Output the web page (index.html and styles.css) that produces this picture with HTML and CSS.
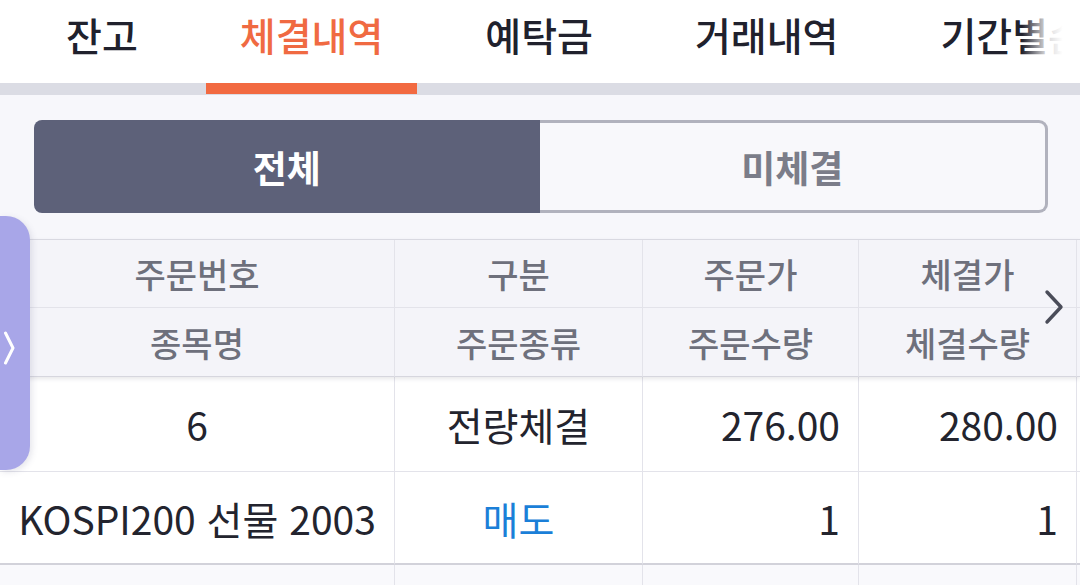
FILE: index.html
```html
<!DOCTYPE html>
<html lang="ko">
<head>
<meta charset="utf-8">
<link rel="stylesheet" href="styles.css">
</head>
<body>
<div class="page">
  <nav class="tabs">
    <div class="tab">잔고</div>
    <div class="tab active">체결내역</div>
    <div class="tab">예탁금</div>
    <div class="tab">거래내역</div>
    <div class="tab">기간별손익</div>
    <div class="tabs-fade"></div>
  </nav>

  <div class="segment">
    <div class="seg seg-on">전체</div>
    <div class="seg seg-off">미체결</div>
  </div>

  <div class="table">
    <div class="thead">
      <div class="hc">주문번호</div>
      <div class="hc">구분</div>
      <div class="hc">주문가</div>
      <div class="hc">체결가</div>
      <div class="hc hc-last"></div>
      <div class="hc hc-b">종목명</div>
      <div class="hc hc-b">주문종류</div>
      <div class="hc hc-b">주문수량</div>
      <div class="hc hc-b">체결수량</div>
      <div class="hc hc-b hc-last"></div>
    </div>
    <div class="tbody">
      <div class="dc center r1">6</div>
      <div class="dc center r1">전량체결</div>
      <div class="dc right r1">276.00</div>
      <div class="dc right r1">280.00</div>
      <div class="dc r1 last"></div>
      <div class="dc center r2">KOSPI200 선물 2003</div>
      <div class="dc center r2 sell">매도</div>
      <div class="dc right r2">1</div>
      <div class="dc right r2">1</div>
      <div class="dc r2 last"></div>
      <div class="dc r3"></div>
      <div class="dc r3"></div>
      <div class="dc r3"></div>
      <div class="dc r3"></div>
      <div class="dc r3 last"></div>
    </div>
  </div>

  <div class="side-handle">
    <svg width="12" height="34" viewBox="0 0 12 34"><path d="M2.5 2 L10 17 L2.5 32" fill="none" stroke="#ffffff" stroke-width="3" stroke-linecap="round" stroke-linejoin="round"/></svg>
  </div>
  <div class="scroll-next">
    <svg width="22" height="36" viewBox="0 0 22 36"><path d="M4 3 L18 18 L4 33" fill="none" stroke="#4a4c59" stroke-width="3.4" stroke-linecap="round" stroke-linejoin="round"/></svg>
  </div>
</div>
</body>
</html>
```

FILE: styles.css
```css
* { box-sizing: border-box; }
html, body { margin: 0; padding: 0; }
body {
  width: 1080px;
  height: 585px;
  overflow: hidden;
  background: #f7f7fb;
  font-family: "Noto Sans CJK KR", "Noto Sans", sans-serif;
}
.page {
  position: relative;
  width: 1080px;
  height: 585px;
  overflow: hidden;
}

/* Tabs */
.tabs {
  position: relative;
  display: flex;
  height: 95px;
  padding-left: 15px;
  background: #ffffff;
  box-shadow: inset 0 -12px 0 #dbdce4;
  white-space: nowrap;
}
.tab {
  position: relative;
  flex: none;
  padding: 7px 51px 0;
  height: 95px;
  font-size: 39px;
  font-weight: 500;
  line-height: 54px;
  color: #20212d;
}
.tab.active { color: #f06a42; }
.tab.active::after {
  content: "";
  position: absolute;
  left: 17px;
  right: 17px;
  bottom: 1px;
  height: 11px;
  background: #f26a41;
}
.tabs-fade {
  position: absolute;
  top: 0;
  right: 0;
  width: 58px;
  height: 83px;
  background: linear-gradient(to right, rgba(255,255,255,0) 0%, rgba(255,255,255,0.8) 40%, #ffffff 70%);
}

/* Segment */
.segment {
  display: flex;
  margin: 25px 32px 0 34px;
  height: 93px;
}
.seg {
  flex: 1;
  display: flex;
  align-items: center;
  justify-content: center;
  font-size: 37px;
  font-weight: 700;
}
.seg-on {
  background: #5d6179;
  color: #ffffff;
  border-radius: 8px 0 0 8px;
}
.seg-off {
  color: #7b7d89;
  border: 3px solid #b1b2bd;
  border-left: none;
  border-radius: 0 9px 9px 0;
  background: #f8f8fb;
}

/* Table */
.table {
  margin-top: 26px;
}
.thead, .tbody {
  display: grid;
  grid-template-columns: 395px 248px 216px 218px 1fr;
}
.thead {
  position: relative;
  z-index: 1;
  background: #f4f4f9;
  border-top: 1px solid #d9d9e1;
  box-shadow: 0 2px 4px rgba(60, 60, 80, 0.12);
}
.hc {
  height: 68px;
  display: flex;
  align-items: center;
  justify-content: center;
  font-size: 34px;
  font-weight: 500;
  color: #6e707c;
  border-right: 1px solid #e3e3ea;
  border-bottom: 1px solid #e3e3ea;
}
.hc-b { height: 69px; border-bottom: 1px solid #d6d6de; }
.hc-last { border-right: none; }

.tbody { background: #ffffff; }
.dc {
  display: flex;
  align-items: center;
  font-size: 39px;
  font-weight: 400;
  color: #23242e;
  border-right: 1px solid #e3e3ea;
  border-bottom: 1px solid #e3e3ea;
}
.dc.last { border-right: none; }
.center { justify-content: center; }
.right { justify-content: flex-end; padding-right: 18px; }
.r1 { height: 95px; }
.r2 { height: 93px; border-bottom: 2px solid #d2d2da; }
.r3 { height: 40px; background: #f9f9fc; border-bottom: none; }
.sell { color: #1b7fd8; }

/* Overlays */
.side-handle {
  position: absolute;
  left: 0;
  top: 216px;
  width: 30px;
  height: 254px;
  background: #a8a6e8;
  border-radius: 0 24px 24px 0;
  box-shadow: 2px 2px 6px rgba(80, 80, 120, 0.15);
  z-index: 3;
  display: flex;
  align-items: center;
  padding-left: 3px;
  padding-top: 10px;
}
.scroll-next {
  position: absolute;
  left: 1043px;
  top: 289px;
  width: 22px;
  height: 36px;
  z-index: 3;
  display: flex;
}
```
